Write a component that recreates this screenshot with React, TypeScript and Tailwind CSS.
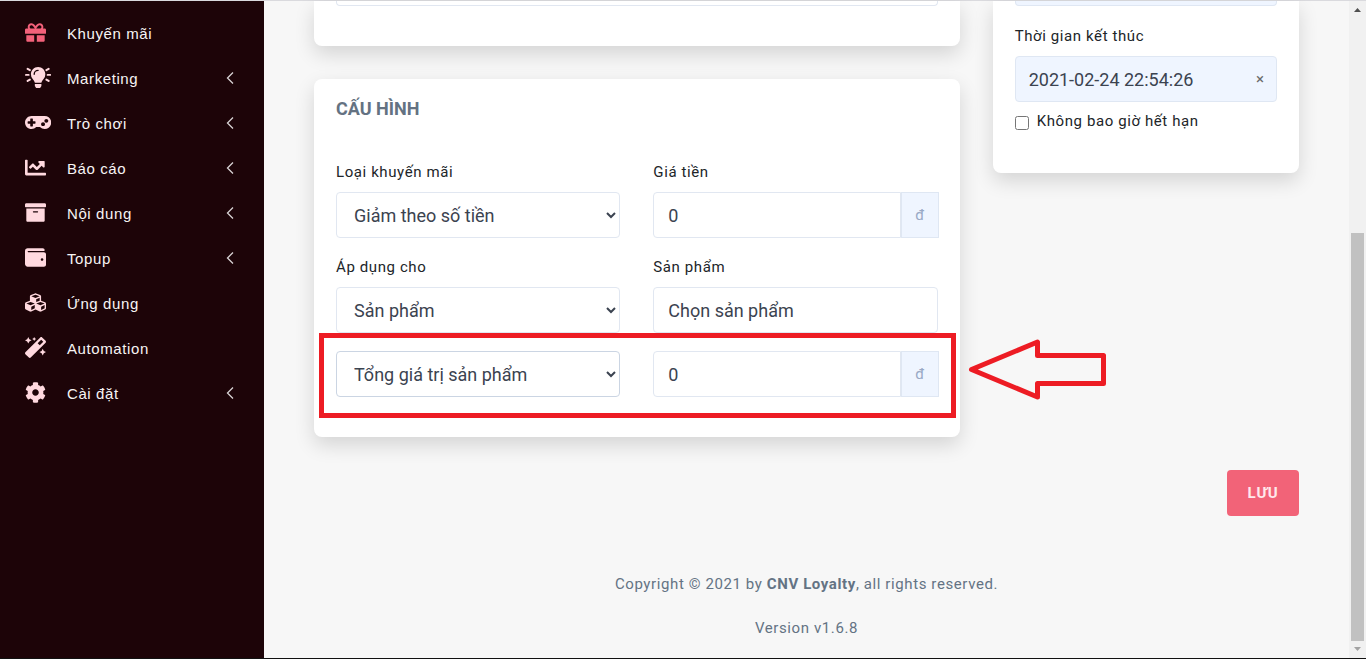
import React from "react";
import {
  FaArchive,
  FaChartLine,
  FaCog,
  FaCubes,
  FaGift,
  FaMagic,
  FaWallet,
} from "react-icons/fa";

function LightbulbOn({ className }: { className?: string }) {
  return (
    <svg viewBox="0 0 640 512" className={className} fill="currentColor" aria-hidden="true">
      <path d="M320 0C217.06 0 143.88 83.55 144 176.23a175 175 0 0 0 43.56 115.55C213.22 321 237.84 368.69 240 384h160c2.16-15.31 26.8-63 52.44-92.22A175.9 175.9 0 0 0 496 176C496 78.63 417.4 0 320 0Zm0 96a80.09 80.09 0 0 0-80 80 16 16 0 0 1-32 0A112.12 112.12 0 0 1 320 64a16 16 0 0 1 0 32ZM240.06 454.34A32 32 0 0 0 245.42 472l17.1 25.69c5.23 7.91 17.17 14.28 26.64 14.28h61.7c9.47 0 21.41-6.37 26.64-14.28L394.59 472A37.47 37.47 0 0 0 400 454.34V416H240Z" />
      <path
        d="M24 192h64M64 340l55-32M64 44l55 32M616 192h-64M576 340l-55-32M576 44l-55 32"
        fill="none"
        stroke="currentColor"
        strokeWidth="48"
        strokeLinecap="round"
      />
    </svg>
  );
}

function Gamepad({ className }: { className?: string }) {
  return (
    <svg viewBox="0 0 640 512" className={className} fill="currentColor" aria-hidden="true">
      <path d="M480 96H160C71.6 96 0 167.6 0 256s71.6 160 160 160c44.8 0 85.2-18.4 114.2-48h91.5c29 29.6 69.5 48 114.2 48 88.4 0 160-71.6 160-160S568.4 96 480 96zM256 276c0 6.6-5.4 12-12 12h-52v52c0 6.6-5.4 12-12 12h-40c-6.6 0-12-5.4-12-12v-52H76c-6.6 0-12-5.4-12-12v-40c0-6.6 5.4-12 12-12h52v-52c0-6.6 5.4-12 12-12h40c6.6 0 12 5.4 12 12v52h52c6.6 0 12 5.4 12 12v40zm184 68c-26.5 0-48-21.5-48-48s21.5-48 48-48 48 21.5 48 48-21.5 48-48 48zm80-80c-26.5 0-48-21.5-48-48s21.5-48 48-48 48 21.5 48 48-21.5 48-48 48z" />
    </svg>
  );
}

function ChevronLeft() {
  return (
    <svg viewBox="0 0 8 12" className="h-3 w-2" fill="none" stroke="#d8d3d4" strokeWidth="1.3" aria-hidden="true">
      <path d="M7 0.5 1.5 6 7 11.5" />
    </svg>
  );
}

type Item = {
  label: string;
  icon: React.ComponentType<{ className?: string }>;
  active?: boolean;
  expandable?: boolean;
};

const items: Item[] = [
  { label: "Khuyến mãi", icon: FaGift, active: true },
  { label: "Marketing", icon: LightbulbOn, expandable: true },
  { label: "Trò chơi", icon: Gamepad, expandable: true },
  { label: "Báo cáo", icon: FaChartLine, expandable: true },
  { label: "Nội dung", icon: FaArchive, expandable: true },
  { label: "Topup", icon: FaWallet, expandable: true },
  { label: "Ứng dụng", icon: FaCubes },
  { label: "Automation", icon: FaMagic },
  { label: "Cài đặt", icon: FaCog, expandable: true },
];

function Sidebar() {
  return (
    <nav className="w-[264px] shrink-0 bg-[#1d0408] pt-[9px] font-['Liberation_Sans',Arial,sans-serif] text-[15px] tracking-[0.04em] text-[#f7f4f4]">
      <ul>
        {items.map(({ label, icon: Icon, active, expandable }) => (
          <li key={label}>
            <a href="#" className="flex h-[45px] items-center pr-[30px] pl-[25px]">
              <span className={active ? "w-[42px] text-[#f3617a]" : "w-[42px] text-[#ffd9df]"}>
                <Icon className="h-[21px] w-auto" />
              </span>
              <span className="grow pt-1">{label}</span>
              {expandable && <ChevronLeft />}
            </a>
          </li>
        ))}
      </ul>
    </nav>
  );
}

const cardClass = "bg-white px-[22px] pb-10 shadow-[0_8px_20px_rgba(0,0,0,0.14)]";
const labelClass = "mb-2 block text-[15px] leading-[23px] tracking-[0.04em] text-[#212529]";
const fieldClass = "h-[46px] w-full rounded border bg-white text-lg text-[#3b4350]";

function SelectField({ id, value, label, focused }: { id: string; value: string; label: string; focused?: boolean }) {
  return (
    <select
      id={id}
      aria-label={label}
      className={`${fieldClass} pl-[13px] ${focused ? "border-[#cbd5e3]" : "border-[#e1e7f1]"}`}
    >
      <option>{value}</option>
    </select>
  );
}

function MoneyField({ id, label }: { id: string; label: string }) {
  return (
    <div className="-mr-px flex">
      <input
        id={id}
        aria-label={label}
        defaultValue="0"
        className="h-[46px] w-full min-w-0 rounded-l border border-[#e1e7f1] bg-white px-[14px] text-lg text-[#3b4350]"
      />
      <span className="flex w-[38px] shrink-0 items-center justify-center border border-[#dfe7f3] bg-[#eff5ff] text-[15px] text-[#99a9c5]">
        đ
      </span>
    </div>
  );
}

function ConfigCard() {
  return (
    <section className={`${cardClass} rounded-lg pt-4`}>
      <h2 className="text-lg leading-7 font-bold text-[#647282]">CẤU HÌNH</h2>
      <div className="mt-[38px] grid grid-cols-2 gap-x-[33px] gap-y-[18px]">
        <div>
          <label htmlFor="promo-type" className={labelClass}>Loại khuyến mãi</label>
          <SelectField id="promo-type" label="Loại khuyến mãi" value="Giảm theo số tiền" />
        </div>
        <div>
          <label htmlFor="price" className={labelClass}>Giá tiền</label>
          <MoneyField id="price" label="Giá tiền" />
        </div>
        <div>
          <label htmlFor="apply-to" className={labelClass}>Áp dụng cho</label>
          <SelectField id="apply-to" label="Áp dụng cho" value="Sản phẩm" />
        </div>
        <div>
          <label htmlFor="product" className={labelClass}>Sản phẩm</label>
          <input id="product" defaultValue="Chọn sản phẩm" className={`${fieldClass} border-[#e1e7f1] px-[14px]`} />
        </div>
        <div className="relative col-span-2 grid grid-cols-2 gap-x-[33px]">
          <SelectField id="condition" label="Điều kiện" value="Tổng giá trị sản phẩm" focused />
          <MoneyField id="condition-value" label="Tổng giá trị" />
          <div className="pointer-events-none absolute -top-[18px] -right-[18px] -bottom-[21px] -left-[17px] border-5 border-[#ed1c24]" />
          <svg
            viewBox="0 0 140 64"
            className="pointer-events-none absolute -top-[13px] left-full ml-[30px] h-16 w-[140px]"
            fill="none"
            stroke="#ed1c24"
            strokeWidth="5"
            strokeLinejoin="round"
            aria-hidden="true"
          >
            <path d="M3.5 31.5 69.5 4V17.5H135.5V45.5H69.5V59Z" />
          </svg>
        </div>
      </div>
    </section>
  );
}

function ScheduleCard() {
  return (
    <section className={`${cardClass} rounded-b-lg`}>
      <div className="h-[5px] rounded-b border border-t-0 border-[#dfe7f3] bg-[#eff5ff]" />
      <div className="mt-[19px]">
        <label htmlFor="end-time" className={labelClass}>Thời gian kết thúc</label>
        <div className="relative">
          <input
            id="end-time"
            defaultValue="2021-02-24 22:54:26"
            className="h-[46px] w-full rounded border border-[#dfe7f3] bg-[#eff5ff] px-[13px] text-lg text-[#3b4350]"
          />
          <button type="button" aria-label="Xóa" className="absolute inset-y-0 right-[13px] text-[15px] text-[#6b6b6b]">
            ×
          </button>
        </div>
      </div>
      <div className="mt-2 flex items-center gap-2">
        <input id="never-expires" type="checkbox" className="mt-0.5 size-[14px]" />
        <label htmlFor="never-expires" className="text-[15px] leading-[23px] tracking-[0.04em] text-[#212529]">
          Không bao giờ hết hạn
        </label>
      </div>
    </section>
  );
}

function ScrollTrack() {
  return (
    <div className="flex w-[17px] shrink-0 flex-col items-center bg-[#f1f1f1]" aria-hidden="true">
      <svg viewBox="0 0 17 17" className="size-[17px]"><path d="M5 11 8.5 7 12 11Z" fill="#505050" /></svg>
      <div className="grow-[215]" />
      <div className="w-[13px] grow-[408] bg-[#c1c1c1]" />
      <svg viewBox="0 0 17 17" className="size-[17px]"><path d="M5 6 8.5 10 12 6Z" fill="#a3a3a3" /></svg>
    </div>
  );
}

export default function App() {
  return (
    <div className="flex min-h-screen border-t border-b border-t-[#dadade] border-b-[#111] bg-[#f7f7f7] font-[Roboto,sans-serif]">
      <Sidebar />
      <main className="min-w-0 grow px-[50px]">
        <div className="grid grid-cols-12 items-start gap-[33px]">
          <div className="col-span-8 flex flex-col gap-[33px]">
            <section className={`${cardClass} rounded-b-lg`}>
              <div className="h-[5px] rounded-b border border-t-0 border-[#e1e7f1]" />
            </section>
            <ConfigCard />
          </div>
          <div className="col-span-4">
            <ScheduleCard />
          </div>
        </div>
        <div className="mt-[33px] flex justify-end">
          <button type="button" className="h-[46px] w-[72px] rounded bg-[#f26378] text-[15px] font-bold tracking-wider text-[#ffe9ec]">
            LƯU
          </button>
        </div>
        <footer className="mt-14 flex flex-col gap-5 text-center text-[15px] leading-6 tracking-[0.04em] text-[#647384]">
          <p>
            Copyright © 2021 by <b className="font-bold">CNV Loyalty</b>, all rights reserved.
          </p>
          <p>Version v1.6.8</p>
        </footer>
      </main>
      <ScrollTrack />
    </div>
  );
}
